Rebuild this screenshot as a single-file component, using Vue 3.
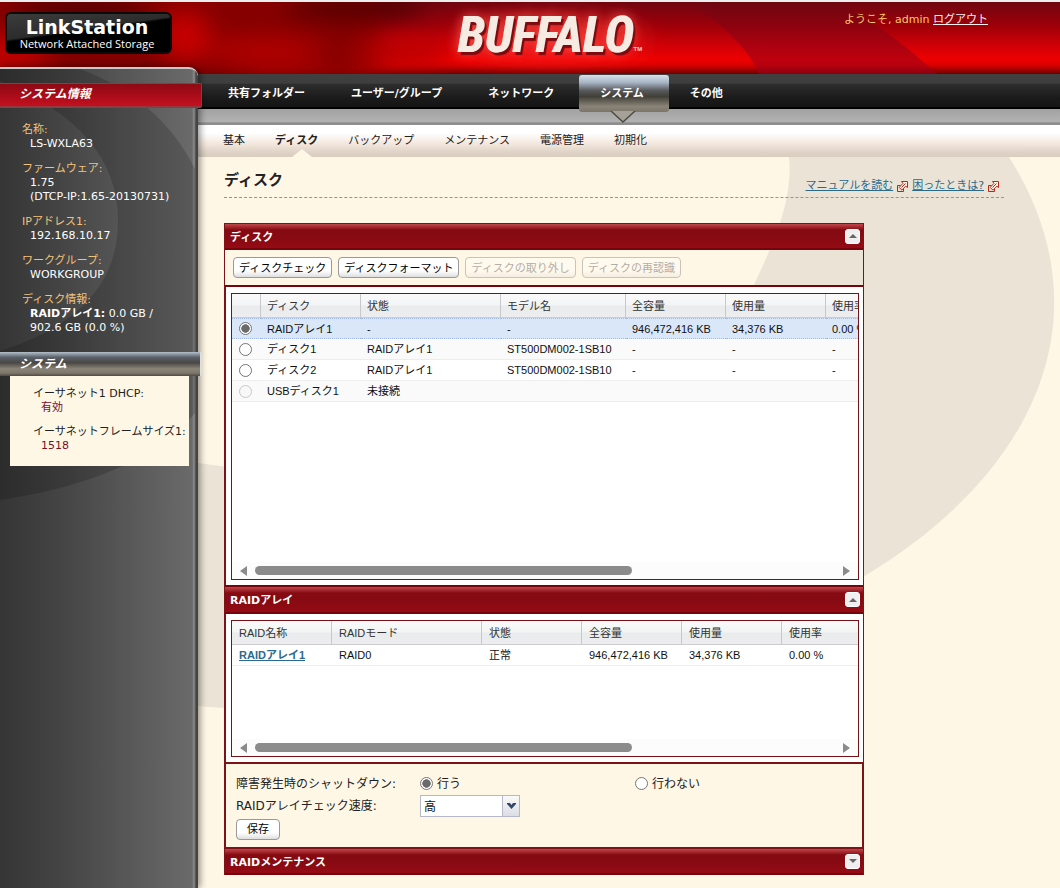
<script setup>
import { ref } from 'vue'

const mainNav = ['共有フォルダー', 'ユーザー/グループ', 'ネットワーク', 'システム', 'その他']
const subNav = ['基本', 'ディスク', 'バックアップ', 'メンテナンス', '電源管理', '初期化']
const helpLinks = ['マニュアルを読む', '困ったときは?']

const info = [
  { label: '名称:', lines: ['LS-WXLA63'] },
  { label: 'ファームウェア:', lines: ['1.75', '(DTCP-IP:1.65-20130731)'] },
  { label: 'IPアドレス1:', lines: ['192.168.10.17'] },
  { label: 'ワークグループ:', lines: ['WORKGROUP'] }
]

const actions = [
  { label: 'ディスクチェック', disabled: false },
  { label: 'ディスクフォーマット', disabled: false },
  { label: 'ディスクの取り外し', disabled: true },
  { label: 'ディスクの再認識', disabled: true }
]

const disks = [
  { name: 'RAIDアレイ1', cells: ['-', '-', '946,472,416 KB', '34,376 KB', '0.00 %'] },
  { name: 'ディスク1', cells: ['RAIDアレイ1', 'ST500DM002-1SB10', '-', '-', '-'] },
  { name: 'ディスク2', cells: ['RAIDアレイ1', 'ST500DM002-1SB10', '-', '-', '-'] },
  { name: 'USBディスク1', cells: ['未接続', '', '', '', ''], disabled: true }
]

const selected = ref('RAIDアレイ1')
const shutdown = ref('on')
const speed = ref('高')
</script>

<template>
  <div class="page">
    <header class="top">
      <svg class="top-art" viewBox="0 0 1060 72" preserveAspectRatio="none" aria-hidden="true">
        <defs>
          <filter id="soft" x="-30%" y="-60%" width="160%" height="220%"><feGaussianBlur stdDeviation="12" /></filter>
          <linearGradient id="shade" x1="0" y1="0" x2="0" y2="1">
            <stop offset="0" stop-color="#6b0810" stop-opacity="0.5" />
            <stop offset="1" stop-color="#a0001c" stop-opacity="0.55" />
          </linearGradient>
        </defs>
        <g filter="url(#soft)">
          <rect x="-20" y="-20" width="400" height="100" fill="#860006" />
          <ellipse cx="80" cy="8" rx="70" ry="12" fill="#4a0004" />
          <ellipse cx="10" cy="50" rx="40" ry="14" fill="#c80004" />
          <ellipse cx="185" cy="35" rx="24" ry="24" fill="#c80004" />
          <ellipse cx="265" cy="50" rx="60" ry="12" fill="#b80004" />
          <ellipse cx="355" cy="6" rx="70" ry="12" fill="#4a0004" />
          <ellipse cx="400" cy="52" rx="50" ry="12" fill="#b40004" />
          <ellipse cx="130" cy="78" rx="130" ry="7" fill="#2a0002" />
        </g>
        <ellipse cx="551" cy="38" rx="95" ry="22" fill="#ff2b2b" opacity="0.6" filter="url(#soft)" />
        <path d="M700 8Q744 38 759 72H937Q885 24 835 0H700Z" fill="url(#shade)" />
      </svg>
      <div class="product">
        <span class="product-name">LinkStation</span>
        <span class="product-sub">Network Attached Storage</span>
      </div>
      <div class="brand"><span class="brand-name">BUFFALO</span><span class="tm">TM</span></div>
      <div class="account">ようこそ, admin <a href="#">ログアウト</a></div>
    </header>

    <div class="columns">
      <aside class="side">
        <svg class="side-art" viewBox="0 0 198 435" aria-hidden="true">
          <path d="M0 0H80Q160 30 195 100V344Q140 410 0 431Z M0 12Q118 60 118 152Q118 245 0 282Z" fill="#000" fill-opacity="0.16" fill-rule="evenodd" />
        </svg>
        <h2 class="bar bar-red">システム情報</h2>
        <dl class="facts">
          <div v-for="item in info" :key="item.label">
            <dt>{{ item.label }}</dt>
            <dd v-for="line in item.lines" :key="line">{{ line }}</dd>
          </div>
          <div>
            <dt>ディスク情報:</dt>
            <dd><b>RAIDアレイ1:</b> 0.0 GB / 902.6 GB (0.0 %)</dd>
          </div>
        </dl>
        <h2 class="bar bar-steel">システム</h2>
        <dl class="facts facts-card">
          <div><dt>イーサネット1 DHCP:</dt><dd>有効</dd></div>
          <div><dt>イーサネットフレームサイズ1:</dt><dd>1518</dd></div>
        </dl>
      </aside>

      <div class="content">
        <nav class="main-nav">
          <a v-for="item in mainNav" :key="item" href="#" :class="{ active: item === 'システム' }">
            {{ item }}
            <svg v-if="item === 'システム'" class="pointer" viewBox="0 0 26 12" aria-hidden="true">
              <path d="M1 0L13 11L25 0Z" fill="#a5a198" />
              <path d="M1 0L13 11L25 0" fill="none" stroke="#4d4940" stroke-width="1.4" />
            </svg>
          </a>
        </nav>
        <div class="strip"></div>
        <nav class="sub-nav">
          <a v-for="item in subNav" :key="item" href="#" :class="{ active: item === 'ディスク' }">{{ item }}</a>
        </nav>

        <main class="main">
          <svg class="swoosh" viewBox="0 0 862 731" aria-hidden="true">
            <path d="M811 0C908 153 844 313 665 420C502 523 202 568 0 549V306C252 343 482 283 555 130C577 83 595 43 591 0Z" fill="#ebe4d6" />
          </svg>
          <div class="title-row">
            <h1>ディスク</h1>
            <p class="help">
              <template v-for="link in helpLinks" :key="link">
                <a href="#">{{ link }}</a>
                <svg viewBox="0 0 11 11" aria-hidden="true">
                  <path d="M3.5 4.5H.5V10.500H6.500V7.500" fill="none" stroke="#b5281c" />
                  <path d="M4.500 .5H10.500V6.500L8.800 5.200L4.800 9L2.200 6.400L6 2.400Z" fill="#fff4e6" stroke="#b5281c" />
                  <path d="M4.500 6.500L8.500 2.500" fill="none" stroke="#b5281c" />
                </svg>
              </template>
            </p>
          </div>

          <div class="panels">
            <section class="panel">
              <div class="panel-head">
                <h2>ディスク</h2>
                <button type="button" class="toggle" aria-label="折りたたむ"><i class="up"></i></button>
              </div>
              <div class="toolbar">
                <button v-for="a in actions" :key="a.label" type="button" class="btn" :disabled="a.disabled">{{ a.label }}</button>
              </div>
              <div class="grid-wrap">
                <div class="grid tall">
                  <table>
                    <colgroup>
                      <col class="w29" /><col class="w100" /><col class="w140" /><col class="w125" />
                      <col class="w100" /><col class="w100" /><col class="w100" />
                    </colgroup>
                    <thead>
                      <tr>
                        <th></th><th>ディスク</th><th>状態</th><th>モデル名</th><th>全容量</th><th>使用量</th><th>使用率</th>
                      </tr>
                    </thead>
                    <tbody>
                      <tr v-for="d in disks" :key="d.name" :class="{ chosen: d.name === selected }">
                        <td class="pick">
                          <input v-model="selected" type="radio" name="disk" :value="d.name" :disabled="d.disabled" :aria-label="d.name" />
                        </td>
                        <td>{{ d.name }}</td>
                        <td v-for="(c, i) in d.cells" :key="i">{{ c }}</td>
                      </tr>
                    </tbody>
                  </table>
                  <div class="scroll"><i class="left"></i><div class="track"><div class="thumb"></div></div><i class="right"></i></div>
                </div>
              </div>
            </section>

            <section class="panel">
              <div class="panel-head thick">
                <h2>RAIDアレイ</h2>
                <button type="button" class="toggle" aria-label="折りたたむ"><i class="up"></i></button>
              </div>
              <div class="grid-wrap">
                <div class="grid short">
                  <table>
                    <colgroup>
                      <col class="w100" /><col class="w150" /><col class="w100" /><col class="w100" /><col class="w100" /><col class="w100" />
                    </colgroup>
                    <thead>
                      <tr>
                        <th>RAID名称</th><th>RAIDモード</th><th>状態</th><th>全容量</th><th>使用量</th><th>使用率</th>
                      </tr>
                    </thead>
                    <tbody>
                      <tr>
                        <td><a href="#">RAIDアレイ1</a></td><td>RAID0</td><td>正常</td><td>946,472,416 KB</td><td>34,376 KB</td><td>0.00 %</td>
                      </tr>
                    </tbody>
                  </table>
                  <div class="scroll"><i class="left"></i><div class="track"><div class="thumb"></div></div><i class="right"></i></div>
                </div>
              </div>
              <form class="settings" @submit.prevent>
                <span>障害発生時のシャットダウン:</span>
                <label><input v-model="shutdown" type="radio" name="shutdown" value="on" />行う</label>
                <label><input v-model="shutdown" type="radio" name="shutdown" value="off" />行わない</label>
                <label for="speed">RAIDアレイチェック速度:</label>
                <div class="select">
                  <select id="speed" v-model="speed"><option>高</option></select>
                  <span class="drop">
                    <svg viewBox="0 0 9 6" aria-hidden="true"><path d="M0 0H3L4.500 2L6 0H9V1L4.500 6L0 1Z" fill="#33466b" /></svg>
                  </span>
                </div>
                <button type="submit" class="btn save">保存</button>
              </form>
            </section>

            <section class="panel">
              <div class="panel-head">
                <h2>RAIDメンテナンス</h2>
                <button type="button" class="toggle" aria-label="展開"><i class="down"></i></button>
              </div>
            </section>
          </div>
        </main>
      </div>
    </div>
  </div>
</template>

<style>
html, body { background: #fff7e6; }
</style>

<style scoped>
* { box-sizing: border-box; }
.page {
  display: flex;
  flex-direction: column;
  min-height: 100vh;
  overflow: hidden;
  font: 11px/14px Verdana, "DejaVu Sans", "Noto Sans CJK JP", sans-serif;
  color: #222;
}
h1, h2, p, dl, dd { margin: 0; }

.top {
  position: relative;
  display: grid;
  grid-template-columns: 46% auto 1fr;
  height: 74px;
  padding: 0 72px 0 5px;
  border-top: 2px solid #eee;
  background: linear-gradient(#6f0610, #9c0009 32%, #cf0007 60%, #ee0000 80%, #d80000 88%, #6d0000 100%);
}
.top-art { position: absolute; inset: 0; width: 100%; height: 100%; }
.product {
  position: relative;
  display: flex;
  flex-direction: column;
  align-items: center;
  align-self: start;
  width: 167px;
  height: 42px;
  margin-top: 10px;
  padding: 4px 3px 0 0;
  border: 2px solid #0b0b0b;
  border-radius: 6px;
  background: linear-gradient(172deg, #3c3c3c, #2c2c2c 42%, #000 46%, #000);
  color: #fff;
}
.product-name { font: bold 19px/18px "DejaVu Sans", sans-serif; }
.product-sub { font: 11px/15px "Open Sans", "Noto Sans", sans-serif; white-space: nowrap; }
.brand { position: relative; display: flex; align-items: flex-end; align-self: start; padding-top: 8px; }
.brand-name {
  font: italic bold 50px/50px "Liberation Sans Narrow", "Roboto Condensed", "Liberation Sans", sans-serif;
  color: #f6ebe3;
  text-shadow: 1px 0 #f6ebe3, 3px 3px 1px #7c0a0e, 0 0 12px #ff5a50;
}
.tm { padding-bottom: 7px; font: bold 6px/7px "Liberation Sans", sans-serif; color: #f6d5cc; }
.account { position: relative; padding-top: 11px; text-align: right; color: #ffc56b; }
.account a { color: #ffeef0; }

.columns { display: flex; flex: 1; align-items: stretch; }
.side {
  position: relative;
  z-index: 2;
  flex: 0 0 198px;
  margin-top: -7px;
  border: solid #c9c9c9;
  border-width: 2px 0 0;
  border-radius: 0 9px 0 0;
  background: linear-gradient(90deg, #353535, #444 30%, #6a6a6a 97%, #8d8d8d 98%, #444 99%);
  box-shadow: 2px 0 7px rgba(0, 0, 0, 0.45);
}
.side-art { position: absolute; top: 0; left: 0; width: 198px; }
.bar {
  position: relative;
  height: 25px;
  margin: 14px -4px 0 0;
  padding-left: 19px;
  border-radius: 0 2px 2px 0;
  font-size: 12px;
  line-height: 21px;
  font-style: italic;
  color: #fff;
}
.bar-red { border: solid #8f3a40; border-width: 1px 1px 2px 0; background: linear-gradient(#8d0a14, #a50c18 45%, #c4101f); }
.bar-steel {
  height: 24px;
  line-height: 24px;
  border-right: 2px solid #ddd;
  background: linear-gradient(#b4c0cc, #59616a 22%, #4a4742 45%, #8a8377 70%, #7d766b 88%, #4d4a45);
}
.facts { position: relative; display: flex; flex-direction: column; gap: 11px; padding: 15px 18px 3px 22px; }
.facts dt { color: #f3c27b; }
.facts dd { padding-left: 8px; color: #fff; }
.facts-card { gap: 10px; margin: 0 9px 0 10px; padding: 11px 0 13px 23px; background: #fff7e6; }
.facts-card dt { color: #222; white-space: nowrap; }
.facts-card dd { color: #7d0e1c; }

.content { display: flex; flex: 1; flex-direction: column; min-width: 0; }
.main-nav {
  position: relative;
  z-index: 1;
  display: flex;
  height: 35px;
  padding-left: 9px;
  background: linear-gradient(#404040, #3e3e3e 26%, #2d2d2d 30%, #1a1a1a 70%, #151515 94%, #000 96%);
}
.main-nav a {
  position: relative;
  height: 37px;
  padding: 0 25px 0 21px;
  font-weight: bold;
  line-height: 39px;
  color: #fff;
  text-decoration: none;
  white-space: nowrap;
}
.main-nav .active {
  margin-top: 1px;
  line-height: 37px;
  border-radius: 3px;
  background: linear-gradient(#d8e0ec, #a9b6c6 20%, #58595b 42%, #423f37 58%, #8a8478 85%, #7a746a);
}
.pointer { position: absolute; top: 36px; left: 31px; width: 26px; height: 12px; }
.strip { height: 16px; background: linear-gradient(#a2a2a2, #b2b2b2 80%, #8e8e8e 86%, #8e8e8e); }
.sub-nav {
  display: flex;
  gap: 30px;
  height: 32px;
  padding-left: 25px;
  background: linear-gradient(#fff 25%, #f3e6dc 60%, #ded3c6 85%, #d8cdbf);
}
.sub-nav a { position: relative; line-height: 32px; color: #222; text-decoration: none; white-space: nowrap; }
.sub-nav .active { font-weight: bold; }
.sub-nav .active::after {
  content: "";
  position: absolute;
  bottom: 0;
  left: 17px;
  border: solid transparent;
  border-width: 0 10px 8px;
  border-bottom-color: #fff7e6;
}

.main { position: relative; flex: 1; padding: 0 26px 13px; }
.swoosh { position: absolute; top: 0; left: 0; width: 862px; height: 731px; }
.title-row {
  position: relative;
  display: flex;
  justify-content: space-between;
  align-items: flex-end;
  max-width: 780px;
  height: 41px;
  padding-bottom: 4px;
  border-bottom: 1px dashed #9b9486;
}
h1 { padding-bottom: 3px; font-size: 15px; line-height: 20px; }
.help { display: flex; gap: 4px; align-items: center; padding-right: 5px; }
.help a { color: #2c6a8d; }
.help svg { width: 11px; height: 11px; }

.panels { position: relative; max-width: 640px; margin-top: 25px; border: solid #7d1217; border-width: 1px 1px 0; }
.panel-head {
  display: flex;
  justify-content: space-between;
  align-items: center;
  height: 26px;
  padding: 0 3px 0 5px;
  border-bottom: 2px solid #76050b;
  background: linear-gradient(#c0474b, #a52a30 12%, #850a12 24%, #880a12 60%, #950b15);
}
.thick { height: 29px; border-top: 2px solid #76050b; }
.panel-head h2 { padding-top: 3px; font-size: 11px; line-height: 14px; color: #fff; }
.toggle {
  display: flex;
  align-items: center;
  justify-content: center;
  width: 15px;
  height: 15px;
  padding: 0;
  border: 1px solid #fff;
  border-radius: 3px;
  background: #f0eeee;
}
.up, .down { border: solid transparent; border-width: 0 4px 4px; border-bottom-color: #666; }
.down { border-width: 4px 4px 0; border-top-color: #666; }

.toolbar { display: flex; gap: 6px; padding: 7px 8px; border-bottom: 2px solid #76050b; }
.btn {
  height: 21px;
  padding: 2px 5px 0;
  border: 1px solid #999;
  border-radius: 4px;
  background: linear-gradient(#fff 65%, #eee 85%, #ddd);
  font: inherit;
  line-height: 14px;
  color: #000;
  white-space: nowrap;
}
.btn:disabled { border-color: #c9c4ba; background: linear-gradient(#fff9ee 65%, #f4eee2); color: #b3aea5; }

.grid-wrap { padding: 6px 4px 5px 5px; border-left: 1px solid #7d1217; background: #fff; }
.grid { display: flex; flex-direction: column; overflow: hidden; border: 1px solid #761217; background: #fff; }
.tall { min-height: 287px; }
.short { min-height: 137px; }
table { width: max-content; min-width: 100%; border-collapse: separate; border-spacing: 0; table-layout: fixed; font: 11px/14px "Liberation Sans", "Noto Sans CJK JP", sans-serif; }
.w29 { width: 29px; }
.w100 { width: 100px; }
.w125 { width: 125px; }
.w140 { width: 140px; }
.w150 { width: 150px; }
th {
  height: 24px;
  padding: 1px 0 0 6px;
  border-right: 1px solid #c8c8c8;
  border-bottom: 1px solid #ccc;
  background: linear-gradient(#fafafa, #f3f4f5 48%, #e9ebed 52%, #ededef);
  font-weight: normal;
  text-align: left;
  color: #333;
}
th:last-child { border-right: 0; }
td { height: 21px; padding: 0 0 0 6px; border-bottom: 1px solid #ededed; white-space: nowrap; color: #111; }
.short th, .short td { padding-left: 7px; }
td a { font-weight: bold; color: #2c6a8d; }
tbody tr:nth-child(even) td { background: #fafafa; }
.chosen td { border: dotted #a3bae9; border-width: 1px 0; background: #dae7f8; }
td.pick { padding-left: 7px; line-height: 0; }
input[type="radio"] {
  appearance: none;
  width: 13px;
  height: 13px;
  margin: 0;
  border: 1px solid #767676;
  border-radius: 50%;
  background: #fff;
}
input[type="radio"]:checked { background: radial-gradient(circle, #6b6b6b 50%, #fff 58%); }
input[type="radio"]:disabled { border-color: #c8c8c8; background: #f8f8f8; }

.scroll { display: flex; align-items: center; height: 17px; margin-top: auto; padding: 0 8px; background: #fcfcfc; }
.left, .right { border: solid transparent; border-width: 5px 7px 5px 0; border-right-color: #8b8b8b; }
.right { border-width: 5px 0 5px 7px; border-left-color: #8b8b8b; }
.track { flex: 1; margin: 0 8px; }
.thumb { width: 65%; height: 9px; border-radius: 5px; background: #8b8b8b; }

.settings {
  display: grid;
  grid-template-columns: 184px 215px 1fr;
  grid-template-rows: 21px 22px 22px;
  row-gap: 1px;
  align-items: center;
  padding: 9px 10px 7px;
  border: solid #7d1217;
  border-width: 2px 1px 2px 1px;
  font-size: 12px;
  line-height: 18px;
}
.settings label { display: flex; gap: 4px; align-items: center; }
.select { position: relative; grid-column: 2 / 4; width: 100px; height: 22px; }
select {
  appearance: none;
  width: 100%;
  height: 100%;
  padding: 2px 22px 0 3px;
  border: 1px solid #b5b8c8;
  border-radius: 0;
  background: #fff;
  font: inherit;
  color: #111;
}
.drop {
  position: absolute;
  top: 1px;
  right: 1px;
  bottom: 1px;
  display: flex;
  align-items: center;
  justify-content: center;
  width: 17px;
  border-left: 1px solid #b5b8c8;
  background: linear-gradient(#fafafa, #dcdde3);
  pointer-events: none;
}
.drop svg { width: 9px; height: 6px; }
.save { justify-self: start; padding: 2px 10px 0; font-size: 11px; }
</style>
